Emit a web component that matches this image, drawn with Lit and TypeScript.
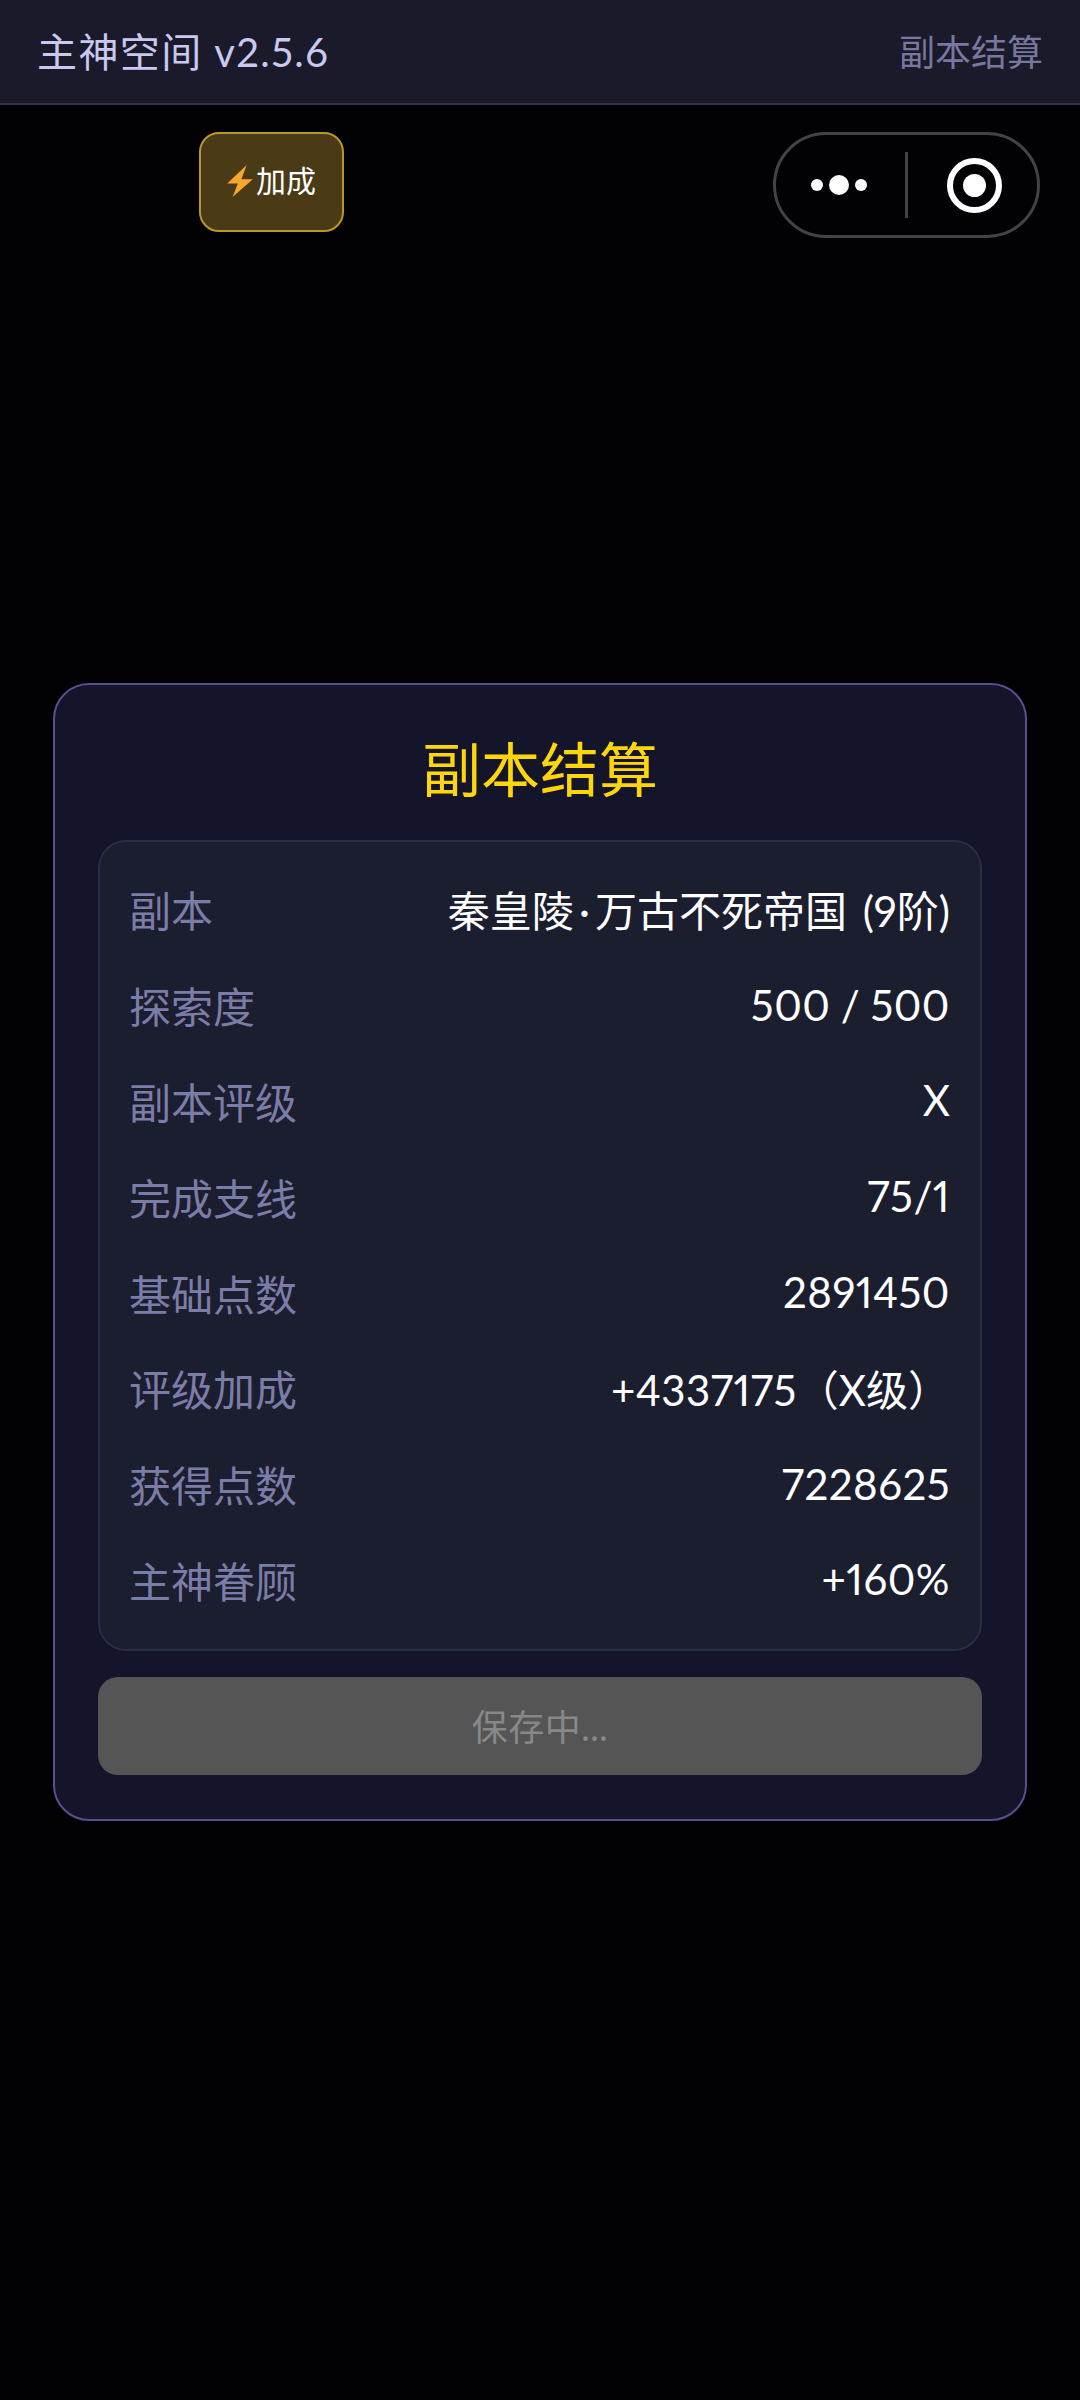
import { LitElement, html, css } from "lit";
import { customElement } from "lit/decorators.js";

const num = (s: string) => html`<span class="num">${s}</span>`;

const ROWS = [
  ["副本", html`秦皇陵<span class="dot">·</span>万古不死帝国 (9阶)`],
  ["探索度", num("500 / 500")],
  ["副本评级", "X"],
  ["完成支线", num("75/1")],
  ["基础点数", num("2891450")],
  ["评级加成", html`${num("+4337175")}（X级）`],
  ["获得点数", num("7228625")],
  ["主神眷顾", num("+160%")],
];

@customElement("app-root")
export class AppRoot extends LitElement {
  static styles = css`
    :host {
      display: block;
      position: relative;
      width: 1080px;
      height: 2400px;
      background: #020204;
      font-family: "Lato", "Noto Sans CJK SC", sans-serif;
      font-variant-numeric: proportional-nums;
      overflow: hidden;
    }
    .header {
      box-sizing: border-box;
      height: 105px;
      background: #1a1a2a;
      border-bottom: 2px solid #33334a;
      padding: 0 37px 3px 37px;
      display: flex;
      align-items: center;
      justify-content: space-between;
    }
    .title { font-size: 40px; color: #c8c8f0; letter-spacing: 1.4px; }
    .sub { font-size: 36px; color: #77779f; }
    .badge {
      position: absolute;
      left: 199px;
      top: 132px;
      box-sizing: border-box;
      width: 145px;
      height: 100px;
      background: #4a3a15;
      border: 2px solid #b8972f;
      border-radius: 20px;
      padding-bottom: 6px;
      display: flex;
      align-items: center;
      justify-content: center;
      gap: 3px;
      color: #fff;
      font-size: 30px;
    }
    .badge svg { width: 26px; height: 32px; flex: none; margin-top: 3px; }
    .capsule {
      position: absolute;
      left: 773px;
      top: 132px;
      box-sizing: border-box;
      width: 267px;
      height: 106px;
      border: 3px solid #434343;
      border-radius: 53px;
      display: flex;
      align-items: center;
    }
    .cap-l {
      box-sizing: border-box;
      width: 129px;
      padding-right: 3px;
      display: flex;
      justify-content: center;
      align-items: center;
      gap: 6px;
    }
    .d1 { width: 12px; height: 12px; border-radius: 50%; background: #fff; }
    .d2 { width: 20px; height: 20px; border-radius: 50%; background: #fff; }
    .sep { width: 3px; height: 66px; background: #434343; }
    .cap-r { flex: 1; padding-left: 3px; display: flex; justify-content: center; }
    .ring {
      box-sizing: border-box;
      width: 55px;
      height: 55px;
      border: 6px solid #fff;
      border-radius: 50%;
      display: flex;
      align-items: center;
      justify-content: center;
    }
    .ring i { width: 23px; height: 23px; border-radius: 50%; background: #fff; display: block; }
    .modal {
      box-sizing: border-box;
      width: 974px;
      margin: 578px 0 0 53px;
      height: 1138px;
      background: #14142a;
      border: 2px solid #5a5090;
      border-radius: 36px;
      padding: 45px 43px 0;
      display: flex;
      flex-direction: column;
    }
    h2 {
      margin: 0;
      font-size: 59px;
      font-weight: 400;
      line-height: 80px;
      color: #ffd60a;
      text-align: center;
    }
    .panel {
      box-sizing: border-box;
      height: 811px;
      margin-top: 30px;
      background: #1a1e2e;
      border: 2px solid #2a2e42;
      border-radius: 28px;
      padding: 21px 30px 0 29px;
    }
    .row {
      height: 95.8px;
      padding-bottom: 4px;
      box-sizing: border-box;
      display: flex;
      align-items: center;
      justify-content: space-between;
      font-size: 42px;
    }
    .k { color: #7c7ca8; }
    .v { color: #fff; word-spacing: 5px; }
    .num { letter-spacing: 0.5px; word-spacing: -1px; }
    .dot { display: inline-block; width: 21px; text-align: center; }
    .btn {
      height: 98px;
      margin-top: 26px;
      background: #555555;
      border-radius: 20px;
      padding-bottom: 3px;
      box-sizing: border-box;
      display: flex;
      align-items: center;
      justify-content: center;
      font-size: 36px;
      letter-spacing: 0.5px;
      color: #888888;
    }
  `;

  render() {
    return html`
      <div class="header">
        <span class="title">主神空间 v2.5.6</span>
        <span class="sub">副本结算</span>
      </div>
      <div class="badge">
        <svg viewBox="0 0 24 30"><path d="M18.3 0 L0 17.3 L10 17.3 L5 30 L24 13.3 L13.3 13.3 Z" fill="#f7a72a" /></svg>
        <span>加成</span>
      </div>
      <div class="capsule">
        <div class="cap-l"><span class="d1"></span><span class="d2"></span><span class="d1"></span></div>
        <div class="sep"></div>
        <div class="cap-r"><div class="ring"><i></i></div></div>
      </div>
      <div class="modal">
        <h2>副本结算</h2>
        <div class="panel">
          ${ROWS.map(([k, v]) => html`<div class="row"><span class="k">${k}</span><span class="v">${v}</span></div>`)}
        </div>
        <div class="btn">保存中...</div>
      </div>
    `;
  }
}
